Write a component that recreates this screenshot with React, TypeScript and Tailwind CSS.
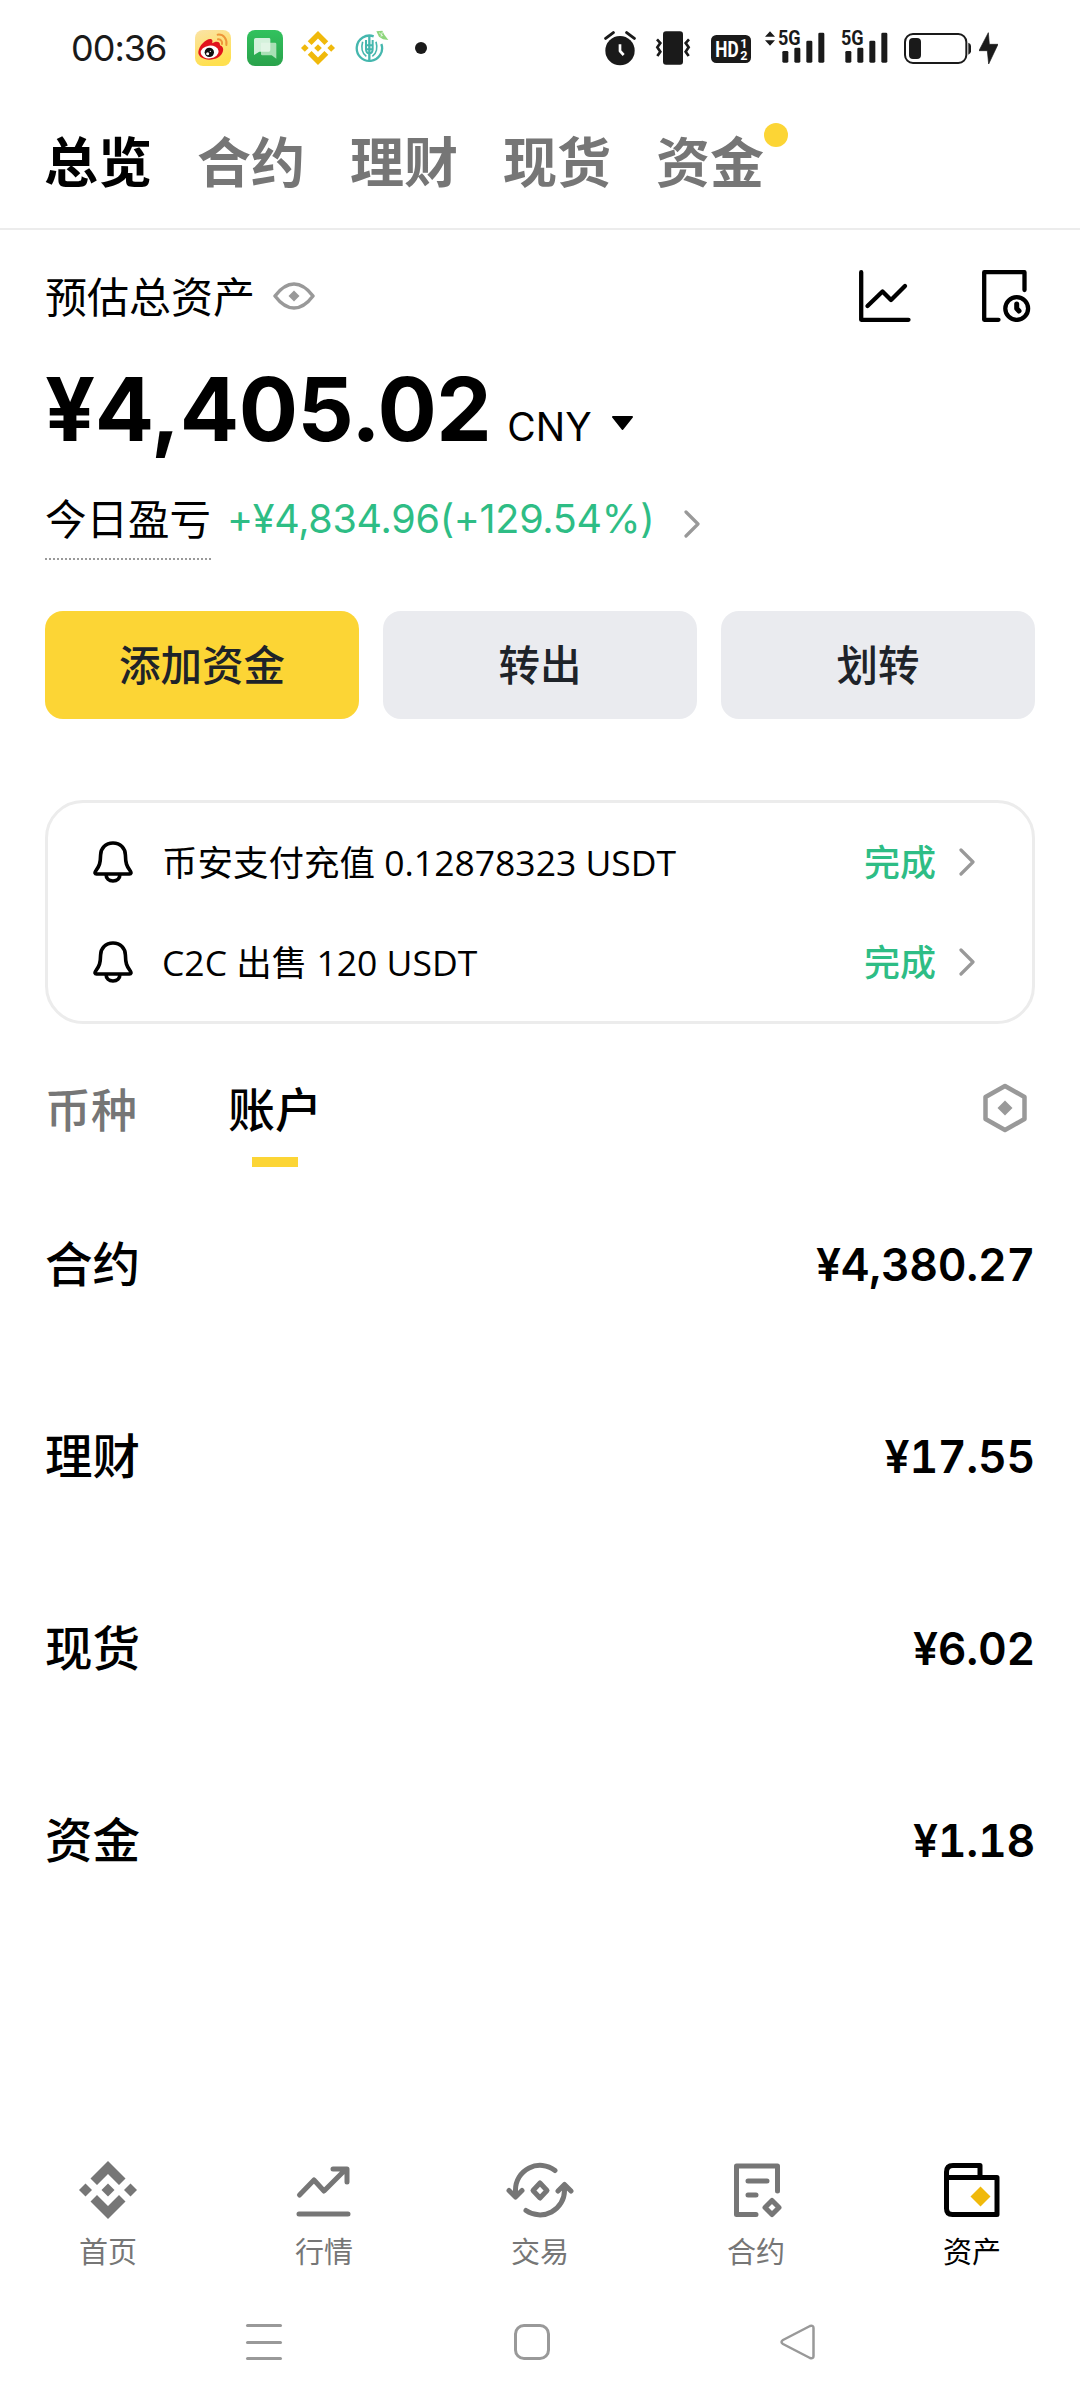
"use client"

import type { ReactNode } from 'react'

interface NavItem {
  label: string
  icon: ReactNode
  active?: boolean
}

const topTabs = ['总览', '合约', '理财', '现货', '资金']

const notices = [
  { text: '币安支付充值 0.12878323 USDT', status: '完成' },
  { text: 'C2C 出售 120 USDT', status: '完成' },
]

const accounts = [
  { name: '合约', amount: '¥4,380.27' },
  { name: '理财', amount: '¥17.55' },
  { name: '现货', amount: '¥6.02' },
  { name: '资金', amount: '¥1.18' },
]

const BinanceMark = ({ className }: { className: string }) => (
  <svg className={className} viewBox="0 0 58 58" fill="currentColor">
    <path d="M29 0 46.500 17.500 40 24 29 13 18 24 11.500 17.500Z" />
    <path d="M29 58 46.500 40.500 40 34 29 45 18 34 11.500 40.500Z" />
    <path d="M6.500 22.500 13 29 6.500 35.500 0 29Z" />
    <path d="M51.500 22.500 58 29 51.500 35.500 45 29Z" />
    <path d="M29 22.500 35.500 29 29 35.500 22.500 29Z" />
  </svg>
)

const Chevron = () => (
  <svg className="h-7 w-4 shrink-0" viewBox="0 0 16 28" fill="none" stroke="#999" strokeWidth="3.200" strokeLinecap="round" strokeLinejoin="round">
    <path d="M2 2 14 14 2 26" />
  </svg>
)

const Bell = () => (
  <svg className="h-[42px] w-10 shrink-0" viewBox="0 0 40 42" fill="none" stroke="#000" strokeWidth="3.600" strokeLinejoin="round">
    <path d="M20 2C12.500 2 7.700 7.200 7.600 14 7.400 22 6.500 25 2.700 30 1.500 31.800 2 33 3.500 33H36.500C38 33 38.500 31.800 37.300 30 33.500 25 32.600 22 32.400 14 32.300 7.200 27.500 2 20 2Z" />
    <path d="M13 33C13 37.500 16 40 20 40S27 37.500 27 33" />
  </svg>
)

const SignalBars = () => (
  <>
    <rect x="0" y="61" width="18" height="35" rx="4" />
    <rect x="36" y="51" width="18" height="45" rx="4" />
    <rect x="72" y="30" width="18" height="66" rx="4" />
    <rect x="108" y="6" width="18" height="90" rx="4" />
  </>
)

const StatusBar = () => (
  <div className="flex h-24 items-center pl-[71px] pr-[82px] text-[#1a1a1a]">
    <span className="w-[124px] font-['Inter',sans-serif] text-[36px] leading-none tracking-[-1px]">00:36</span>
    <svg className="h-9 w-9" viewBox="0 0 108 108">
      <defs>
        <linearGradient id="weibo" x1="0" y1="0" x2="0.300" y2="1">
          <stop offset="0" stopColor="#fbe3a6" />
          <stop offset="1" stopColor="#ffe04f" />
        </linearGradient>
      </defs>
      <rect width="108" height="108" rx="24" fill="url(#weibo)" />
      <path d="M10 66C12 46 34 25 47 27 54 28 53 37 51 40 62 33 76 33 75 46 84 50 86 56 84 63 80 80 62 89 43 89 25 88 9 80 10 66Z" fill="#e1131c" />
      <ellipse cx="44" cy="66" rx="27" ry="19" fill="#fff" transform="rotate(-7 44 66)" />
      <circle cx="43" cy="67" r="14" fill="#111" />
      <circle cx="38" cy="71" r="4.500" fill="#fff" />
      <circle cx="46" cy="64" r="2" fill="#fff" />
      <path d="M68 14C86 12 97 27 94 45M69 28C77 27 83 34 81 42" fill="none" stroke="#ee963a" strokeWidth="6" strokeLinecap="round" />
    </svg>
    <svg className="ml-4 h-9 w-9" viewBox="0 0 108 108">
      <defs>
        <linearGradient id="chat" x1="0" y1="0" x2="0" y2="1">
          <stop offset="0" stopColor="#32c25e" />
          <stop offset="1" stopColor="#2aa24b" />
        </linearGradient>
      </defs>
      <rect width="108" height="108" rx="24" fill="url(#chat)" />
      <path d="M42 38H84Q88 38 88 42V86L74 76H46Q42 76 42 72Z" fill="#a9e0b5" />
      <path d="M26 24H66Q70 24 70 28V60Q70 65 65 65H37L21 75V29Q21 24 26 24Z" fill="#e7f7ea" fillOpacity="0.900" />
    </svg>
    <BinanceMark className="ml-[18px] h-[34px] w-[34px] text-[#f0b90b]" />
    <svg className="ml-5 h-9 w-9" viewBox="0 0 108 108" fill="none" stroke="#45b7ae">
      <path d="M56 19A38 38 0 1 0 79 42" strokeWidth="7" />
      <path d="M23 35C18 52 21 70 34 79M63 35C68 52 65 70 52 79" strokeWidth="5" />
      <path d="M43 16V94" strokeWidth="7" />
      <path d="M33 30V58Q33 70 43 70T53 58V30M33 46H53M33 58H53" strokeWidth="6" />
      <path d="M64 4 82 2 88 14 100 30 84 28 72 20Z" fill="#8ed67c" stroke="none" />
      <path d="M72 8 84 18M82 6 78 20" stroke="#fff" strokeWidth="2" />
    </svg>
    <span className="ml-6 h-3 w-3 rounded-full bg-[#1a1a1a]" />

    <svg className="ml-auto h-9 w-8" viewBox="0 0 96 108" fill="#1a1a1a">
      <circle cx="48" cy="62" r="44" />
      <path d="M5 25 28 8M91 25 68 8" stroke="#1a1a1a" strokeWidth="9" strokeLinecap="round" />
      <path d="M48 43V63L59 75" fill="none" stroke="#fff" strokeWidth="8" strokeLinejoin="round" />
    </svg>
    <svg className="ml-[19px] h-9 w-9" viewBox="0 0 108 108" fill="#1a1a1a">
      <rect x="24" y="4" width="60" height="100" rx="9" />
      <path d="M6 28 16 39 7 52 16 65 7 78M102 28 92 39 101 52 92 65 101 78" fill="none" stroke="#1a1a1a" strokeWidth="8" />
    </svg>
    <svg className="ml-5 h-9 w-10" viewBox="0 0 120 108">
      <rect x="0" y="15" width="120" height="84" rx="16" fill="#1a1a1a" />
      <text x="13" y="80" fill="#fff" className="font-['Roboto',sans-serif] text-[66px] font-bold" textLength="70" lengthAdjust="spacingAndGlyphs">HD</text>
      <text x="88" y="54" fill="#fff" className="font-['Roboto',sans-serif] text-[38px] font-bold">1</text>
      <text x="88" y="90" fill="#fff" className="font-['Roboto',sans-serif] text-[38px] font-bold">2</text>
    </svg>
    <svg className="ml-3.5 h-9 w-[60px] overflow-visible" viewBox="0 0 180 108" fill="#1a1a1a">
      <path d="M0 20 15 4 30 20ZM0 31H30L15 47Z" />
      <text x="39" y="46" className="font-['Roboto',sans-serif] text-[60px] font-bold" textLength="68" lengthAdjust="spacingAndGlyphs">5G</text>
      <g transform="translate(52 2)"><SignalBars /></g>
    </svg>
    <svg className="ml-4 h-9 w-[47px] overflow-visible" viewBox="0 0 141 108" fill="#1a1a1a">
      <text x="0" y="46" className="font-['Roboto',sans-serif] text-[60px] font-bold" textLength="68" lengthAdjust="spacingAndGlyphs">5G</text>
      <g transform="translate(13 2)"><SignalBars /></g>
    </svg>
    <svg className="ml-4 h-9 w-[67px]" viewBox="0 0 201 108" fill="#1a1a1a">
      <rect x="3" y="12" width="184" height="87" rx="24" fill="none" stroke="#1a1a1a" strokeWidth="6" />
      <rect x="15" y="24" width="36" height="63" rx="12" />
      <path d="M193 38Q201 40 201 48V64Q201 72 193 74Z" />
    </svg>
    <svg className="ml-2 h-9 w-[19px]" viewBox="0 0 57 108" fill="#1a1a1a">
      <path d="M28 8 0 62H25L29 102 57 43H31Z" stroke="#1a1a1a" strokeWidth="2" strokeLinejoin="round" />
    </svg>
  </div>
)

const navItems: NavItem[] = [
  { label: '首页', icon: <BinanceMark className="h-[58px] w-[58px]" /> },
  {
    label: '行情',
    icon: (
      <svg className="h-[58px] w-[58px]" viewBox="0 0 58 58" fill="none" stroke="currentColor" strokeWidth="5" strokeLinecap="round" strokeLinejoin="round">
        <path d="M4.500 34 19 19 29 30 50.500 8.500M38 8H52V21M4 53H53" />
      </svg>
    ),
  },
  {
    label: '交易',
    icon: (
      <svg className="h-[58px] w-[68px]" viewBox="0 0 68 58" fill="none" stroke="currentColor" strokeWidth="5" strokeLinecap="round" strokeLinejoin="round">
        <path d="M49 9.500A24.500 24.500 0 0 0 9.500 29V35M3 29.500 9.500 36 16 29.500" />
        <path d="M20 49.500A24.500 24.500 0 0 0 58.500 29V24M52 30 58.500 23.500 65 30" />
        <path d="M34 22 41 29.500 34 37 27 29.500Z" />
      </svg>
    ),
  },
  {
    label: '合约',
    icon: (
      <svg className="h-[58px] w-[58px]" viewBox="0 0 58 58" fill="none" stroke="currentColor" strokeWidth="5" strokeLinecap="round" strokeLinejoin="round">
        <path d="M50.500 30V5H9.500V53.500H29M21 20H40M21 34H29" />
        <path d="M45 39.500 52 46.500 45 53.500 38 46.500Z" />
      </svg>
    ),
  },
  {
    label: '资产',
    active: true,
    icon: (
      <svg className="h-[58px] w-[58px]" viewBox="0 0 58 58" fill="none" stroke="currentColor" strokeWidth="5" strokeLinejoin="round">
        <path d="M3.500 16.500H54V53.500H9.500Q3.500 53.500 3.500 47.500V11Q3.500 4.500 10 4.500H37V16" />
        <path d="M37.500 25.500 47.500 35.500 37.500 45.500 27.500 35.500Z" fill="#f0b90b" stroke="none" />
      </svg>
    ),
  },
]

export default function App() {
  return (
    <div className="flex h-[2408px] w-[1080px] flex-col bg-white font-['Open_Sans','Noto_Sans_CJK_SC',sans-serif] text-black">
      <StatusBar />

      <nav className="flex h-[134px] items-center gap-[45px] border-b-2 border-[#ececec] pl-[44px]">
        {topTabs.map((tab, i) => (
          <div key={tab} className={i === 0 ? 'relative text-[54px] font-bold leading-none' : 'relative text-[54px] font-bold leading-none text-[#767676]'}>
            {tab}
            {tab === '资金' && <span className="absolute -right-6 -top-3 h-6 w-6 rounded-full bg-[#fcd535]" />}
          </div>
        ))}
      </nav>

      <section className="flex flex-col px-[45px]">
        <div className="mt-[34px] flex h-16 items-center">
          <span className="pt-0.5 text-[42px] leading-none">预估总资产</span>
          <svg className="ml-[18px] h-7 w-[42px]" viewBox="0 0 42 28" fill="none" stroke="#999" strokeWidth="3.500" strokeLinejoin="round">
            <path d="M2 14C8 6 14 2 21 2S34 6 40 14C34 22 28 26 21 26S8 22 2 14Z" />
            <path d="M21 8.500 26.500 14 21 19.500 15.500 14Z" fill="#999" stroke="none" />
          </svg>
          <svg className="ml-auto h-[52px] w-[52px]" viewBox="0 0 52 52" fill="none" stroke="#000" strokeWidth="4.300" strokeLinecap="round" strokeLinejoin="round">
            <path d="M2.200 2.200V49.800H49.500M8.500 36 23.500 21.500 32 30 46 16" />
          </svg>
          <svg className="ml-[71px] mr-1 h-[52px] w-[49px]" viewBox="0 0 49 52" fill="none" stroke="#000" strokeWidth="4.300" strokeLinecap="round" strokeLinejoin="round">
            <path d="M42.500 20V2.200H2.200V49.800H16.500" />
            <circle cx="34.700" cy="38.500" r="11.400" />
            <path d="M34.700 34V38.500L37 41" strokeWidth="5" />
          </svg>
        </div>

        <div className="mt-[26px] flex h-[116px] items-baseline font-['Inter',sans-serif]">
          <span className="text-[88px] font-bold leading-[110px] tracking-[-0.500px]">¥4,405.02</span>
          <span className="ml-4 text-[39px] leading-none">CNY</span>
          <svg className="ml-5 h-[25px] w-[21px]" viewBox="0 0 21 25">
            <path d="M1 1H20L10.500 13Z" stroke="#000" strokeWidth="2" strokeLinejoin="round" />
          </svg>
        </div>

        <div className="mt-[13px] flex h-[80px] items-start">
          <span className="h-[77px] border-b-2 border-dotted border-[#999] text-[41.500px] leading-[72px]">今日盈亏</span>
          <span className="ml-4 font-['Inter',sans-serif] text-[39.500px] leading-[72px] tracking-[-0.300px] text-[#2ebd85]">+¥4,834.96(+129.54%)</span>
          <div className="ml-[30px] mt-[27px]"><Chevron /></div>
        </div>

        <div className="mt-[48px] grid grid-cols-3 gap-6 text-[41.500px] font-medium text-[#1e2329]">
          <button className="h-[108px] rounded-[18px] bg-[#fcd535]">添加资金</button>
          <button className="h-[108px] rounded-[18px] bg-[#eaebef]">转出</button>
          <button className="h-[108px] rounded-[18px] bg-[#eaebef]">划转</button>
        </div>

        <div className="mt-[81px] flex h-[224px] flex-col justify-center rounded-[38px] border-[3px] border-[#ececec] pl-[45px] pr-[57px]">
          {notices.map(notice => (
            <div key={notice.text} className="flex h-[100px] items-center">
              <Bell />
              <span className="ml-[29px] pt-px text-[35.500px] leading-none">{notice.text}</span>
              <span className="ml-auto mr-[23px] pt-px text-[36px] font-medium leading-none text-[#2ebd85]">{notice.status}</span>
              <Chevron />
            </div>
          ))}
        </div>
      </section>

      <section className="mt-[50px] flex flex-col px-[45px]">
        <div className="flex h-[94px] items-start">
          <span className="mt-[9px] text-[46px] font-medium leading-[52px] text-[#767676]">币种</span>
          <div className="ml-[91px] mt-[9px] flex flex-col items-center">
            <span className="text-[47px] font-medium leading-[52px]">账户</span>
            <span className="mt-[22px] h-2.5 w-[46px] bg-[#fcd535]" />
          </div>
          <svg className="ml-auto mr-2 mt-[9px] h-[50px] w-11" viewBox="0 0 44 50" fill="none" stroke="#999" strokeWidth="4.500" strokeLinejoin="round">
            <path d="M22 3 41.500 14V36L22 47 2.500 36V14Z" />
            <path d="M22 17.500 29.500 25 22 32.500 14.500 25Z" fill="#999" stroke="none" />
          </svg>
        </div>

        {accounts.map(account => (
          <div key={account.name} className="flex h-48 items-center justify-between font-medium">
            <span className="text-[47.500px] leading-none">{account.name}</span>
            <span className="pt-0.5 font-['Inter',sans-serif] text-[44.500px] font-semibold leading-none tracking-[-0.300px] tabular-nums">{account.amount}</span>
          </div>
        ))}
      </section>

      <nav className="mt-auto grid h-[144px] grid-cols-5">
        {navItems.map(item => (
          <div key={item.label} className={item.active ? 'flex flex-col items-center' : 'flex flex-col items-center text-[#767676]'}>
            {item.icon}
            <span className="mt-[17px] text-[29px] leading-8">{item.label}</span>
          </div>
        ))}
      </nav>

      <div className="flex h-[103px] items-start pl-[246px] pt-[19px]">
        <div className="flex h-9 w-9 flex-col justify-between">
          <span className="h-[3px] rounded-full bg-[#999]" />
          <span className="h-[3px] rounded-full bg-[#999]" />
          <span className="h-[3px] rounded-full bg-[#999]" />
        </div>
        <div className="ml-[232px] h-9 w-9 rounded-[10px] border-[3px] border-[#999]" />
        <svg className="ml-[230px] h-9 w-[35px]" viewBox="0 0 35 36" fill="none" stroke="#999" strokeWidth="2.500" strokeLinejoin="round">
          <path d="M3 16 30 2Q33.500 1 33.500 4V32Q33.500 35 30 34L3 20Q0 18 3 16Z" />
        </svg>
      </div>
    </div>
  )
}
